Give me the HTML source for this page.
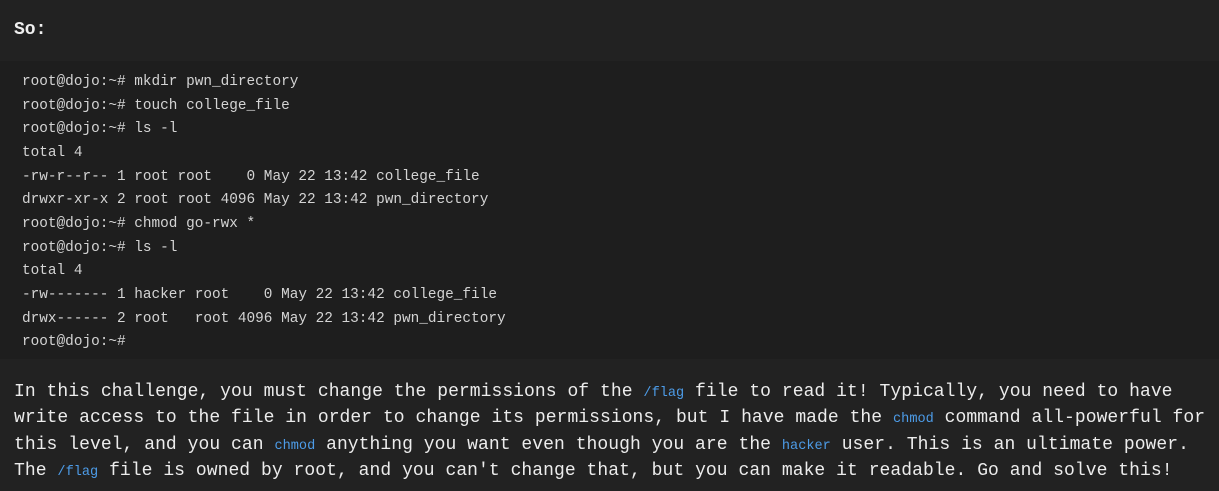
<!DOCTYPE html>
<html><head><meta charset="utf-8"><style>
html,body{margin:0;padding:0;background:#222222;width:1219px;height:491px;overflow:hidden}
body{font-family:"Liberation Mono",monospace;color:#e6e6e6}
.so{position:absolute;left:14px;top:18px;font-size:18px;line-height:25px;font-weight:bold;color:#f0f0f0}
.code{position:absolute;left:0;top:61px;width:1219px;height:298px;background:#1e1e1e}
.code pre{margin:0;position:absolute;left:22px;top:10px;font-family:"Liberation Mono",monospace;font-size:14.4px;line-height:23.65px;color:#d4d4d4}
.txt{position:absolute;left:14px;top:380px;font-size:18px;line-height:25.3px;white-space:pre;color:#ececec;letter-spacing:0.05px}
.c{font-size:13.6px;color:#4d9ce8;letter-spacing:0}
</style></head><body>
<div class="so">So:</div>
<div class="code"><pre>root@dojo:~# mkdir pwn_directory
root@dojo:~# touch college_file
root@dojo:~# ls -l
total 4
-rw-r--r-- 1 root root    0 May 22 13:42 college_file
drwxr-xr-x 2 root root 4096 May 22 13:42 pwn_directory
root@dojo:~# chmod go-rwx *
root@dojo:~# ls -l
total 4
-rw------- 1 hacker root    0 May 22 13:42 college_file
drwx------ 2 root   root 4096 May 22 13:42 pwn_directory
root@dojo:~#</pre></div>
<div class="txt">In this challenge, you must change the permissions of the <span class="c">/flag</span> file to read it! Typically, you need to have
write access to the file in order to change its permissions, but I have made the <span class="c">chmod</span> command all-powerful for
this level, and you can <span class="c">chmod</span> anything you want even though you are the <span class="c">hacker</span> user. This is an ultimate power.
The <span class="c">/flag</span> file is owned by root, and you can't change that, but you can make it readable. Go and solve this!</div>
</body></html>
